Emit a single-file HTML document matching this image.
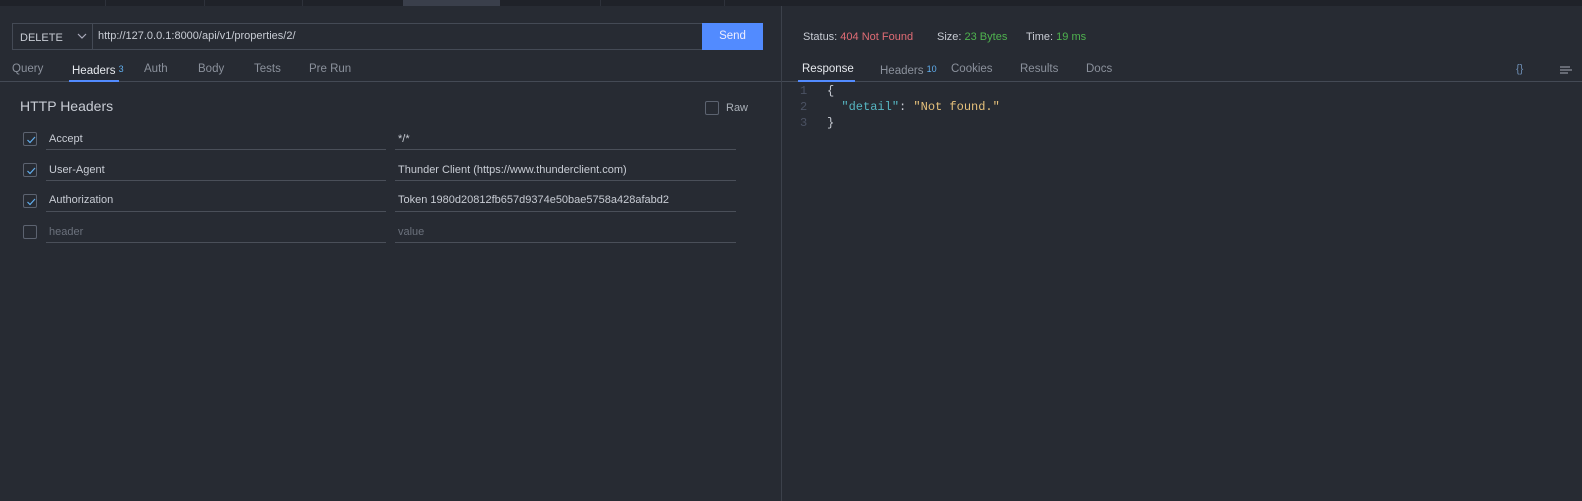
<!DOCTYPE html>
<html><head><meta charset="utf-8"><style>
*{margin:0;padding:0;box-sizing:border-box}
body{width:1582px;height:501px;background:#272b33;font-family:"Liberation Sans",sans-serif;font-size:11px;color:#c8ccd4;position:relative;overflow:hidden}
.a{position:absolute;white-space:nowrap;line-height:16px}
.top{position:absolute;left:0;top:0;width:1582px;height:6px;background:#1f2229}
.sep{position:absolute;top:0;width:1px;height:6px;background:#2e323b}
.cb{position:absolute;width:14px;height:14px;border:1px solid #5c6370;border-radius:2px}
.cb svg{position:absolute;left:1px;top:1px}
.ul{position:absolute;height:1px;background:#4a4f59}
.t{font-size:11.5px}
</style></head><body>
<div class="top"></div>
<div class="sep" style="left:105px"></div><div class="sep" style="left:204px"></div><div class="sep" style="left:302px"></div>
<div class="a" style="left:403px;top:0;width:97px;height:6px;background:#3a3f4b"></div>
<div class="sep" style="left:600px"></div><div class="sep" style="left:724px"></div>
<div class="a" style="left:781px;top:6px;width:1px;height:495px;background:#3c414b"></div>

<div class="a" style="left:12px;top:23px;width:691px;height:27px;border:1px solid #444a55;border-right:none"></div>
<div class="a" style="left:92px;top:23px;width:1px;height:27px;background:#444a55"></div>
<div class="a" style="left:20px;top:30px;color:#c8ccd4">DELETE</div>
<svg class="a" style="left:77px;top:33px" width="10" height="7"><path d="M1 1l4 4 4-4" stroke="#aab" fill="none" stroke-width="1.2"/></svg>
<div class="a" style="left:98px;top:28px;color:#c8ccd4">http://127.0.0.1:8000/api/v1/properties/2/</div>
<div class="a t" style="left:702px;top:23px;width:61px;height:27px;background:#528bff;color:#eef;text-align:center;line-height:27px">Send</div>

<div class="a t" style="left:12px;top:61px;color:#8b919c">Query</div>
<div class="a t" style="left:72px;top:61px;color:#e6e9ee">Headers <span style="font-size:9px;color:#61afef;vertical-align:2px">3</span></div>
<div class="a t" style="left:144px;top:61px;color:#8b919c">Auth</div>
<div class="a t" style="left:198px;top:61px;color:#8b919c">Body</div>
<div class="a t" style="left:254px;top:61px;color:#8b919c">Tests</div>
<div class="a t" style="left:309px;top:61px;color:#8b919c">Pre Run</div>
<div class="a" style="left:0;top:81px;width:781px;height:1px;background:#444a55"></div>
<div class="a" style="left:69px;top:80px;width:50px;height:2px;background:#528bff"></div>

<div class="a" style="left:20px;top:97px;font-size:14px;line-height:18px;color:#c8ccd4">HTTP Headers</div>
<div class="cb" style="left:705px;top:101px"></div>
<div class="a" style="left:726px;top:100px;color:#aab0b8">Raw</div>

<div class="cb" style="left:23px;top:132px"><svg width="12" height="12"><path d="M2.5 6l2.5 2.5 5-5.5" stroke="#61afef" fill="none" stroke-width="1.2"/></svg></div>
<div class="a" style="left:49px;top:131px">Accept</div>
<div class="ul" style="left:46px;top:149px;width:340px"></div>
<div class="a" style="left:398px;top:131px">*/*</div>
<div class="ul" style="left:395px;top:149px;width:341px"></div>

<div class="cb" style="left:23px;top:163px"><svg width="12" height="12"><path d="M2.5 6l2.5 2.5 5-5.5" stroke="#61afef" fill="none" stroke-width="1.2"/></svg></div>
<div class="a" style="left:49px;top:162px">User-Agent</div>
<div class="ul" style="left:46px;top:180px;width:340px"></div>
<div class="a" style="left:398px;top:162px">Thunder Client (https://www.thunderclient.com)</div>
<div class="ul" style="left:395px;top:180px;width:341px"></div>

<div class="cb" style="left:23px;top:194px"><svg width="12" height="12"><path d="M2.5 6l2.5 2.5 5-5.5" stroke="#61afef" fill="none" stroke-width="1.2"/></svg></div>
<div class="a" style="left:49px;top:192px">Authorization</div>
<div class="ul" style="left:46px;top:211px;width:340px"></div>
<div class="a" style="left:398px;top:192px">Token 1980d20812fb657d9374e50bae5758a428afabd2</div>
<div class="ul" style="left:395px;top:211px;width:341px"></div>

<div class="cb" style="left:23px;top:225px"></div>
<div class="a" style="left:49px;top:224px;color:#6b717c">header</div>
<div class="ul" style="left:46px;top:242px;width:340px"></div>
<div class="a" style="left:398px;top:224px;color:#6b717c">value</div>
<div class="ul" style="left:395px;top:242px;width:341px"></div>

<div class="a" style="left:803px;top:29px;color:#c8ccd4">Status: <span style="color:#e06c75">404 Not Found</span></div>
<div class="a" style="left:937px;top:29px;color:#c8ccd4">Size: <span style="color:#4fb34f">23 Bytes</span></div>
<div class="a" style="left:1026px;top:29px;color:#c8ccd4">Time: <span style="color:#4fb34f">19 ms</span></div>

<div class="a t" style="left:802px;top:61px;color:#e6e9ee">Response</div>
<div class="a t" style="left:880px;top:61px;color:#8b919c">Headers <span style="font-size:9px;color:#61afef;vertical-align:2px">10</span></div>
<div class="a t" style="left:951px;top:61px;color:#8b919c">Cookies</div>
<div class="a t" style="left:1020px;top:61px;color:#8b919c">Results</div>
<div class="a t" style="left:1086px;top:61px;color:#8b919c">Docs</div>
<div class="a" style="left:1516px;top:61px;color:#6b8bb0;font-size:11px">{}</div>
<svg class="a" style="left:1560px;top:66px" width="12" height="10"><path d="M0 1h10M0 4h12M0 7h8" stroke="#8b919c" stroke-width="1.2"/></svg>
<div class="a" style="left:782px;top:81px;width:800px;height:1px;background:#444a55"></div>
<div class="a" style="left:798px;top:80px;width:57px;height:2px;background:#528bff"></div>

<div class="a" style="left:800px;top:83px;font-family:'Liberation Mono',monospace;font-size:12px;line-height:16px;color:#4b5263">1<br>2<br>3</div>
<div class="a" style="left:827px;top:83px;font-family:'Liberation Mono',monospace;font-size:12px;line-height:16px;color:#c8ccd4">{<br>&nbsp;&nbsp;<span style="color:#56b6c2">"detail"</span>: <span style="color:#e5c07b">"Not found."</span><br>}</div>
</body></html>
